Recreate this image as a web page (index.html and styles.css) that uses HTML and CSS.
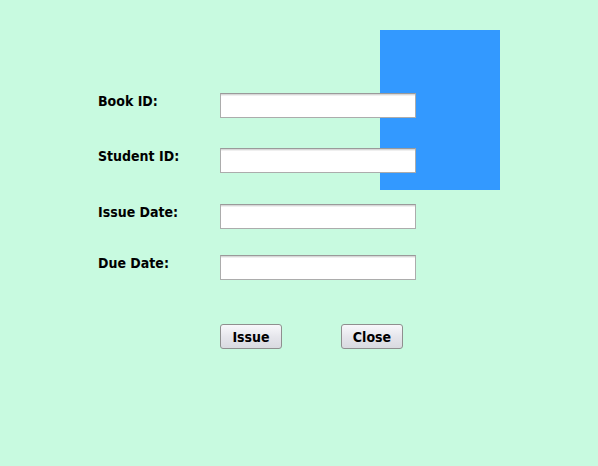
FILE: index.html
```html
<!DOCTYPE html>
<html>
<head>
<meta charset="utf-8">
<link rel="stylesheet" href="styles.css">
</head>
<body>
<div class="frame">
  <div class="photo"></div>
  <form class="form">
    <div class="row r1">
      <label class="lbl">Book ID:</label>
      <input class="field" type="text">
    </div>
    <div class="row r2">
      <label class="lbl">Student ID:</label>
      <input class="field" type="text">
    </div>
    <div class="row r3">
      <label class="lbl">Issue Date:</label>
      <input class="field" type="text">
    </div>
    <div class="row r4">
      <label class="lbl">Due Date:</label>
      <input class="field" type="text">
    </div>
    <div class="actions">
      <button type="button" class="btn">Issue</button>
      <button type="button" class="btn">Close</button>
    </div>
  </form>
</div>
</body>
</html>
```

FILE: styles.css
```css
html, body {
  margin: 0;
  padding: 0;
  background: #c8fae0;
}
.frame {
  position: relative;
  width: 598px;
  height: 466px;
  background: #c8fae0;
  font-family: "DejaVu Sans Condensed", "DejaVu Sans", sans-serif;
  font-stretch: condensed;
  font-weight: bold;
  font-size: 14px;
  color: #000;
}
.photo {
  position: absolute;
  left: 380px;
  top: 30px;
  width: 120px;
  height: 160px;
  background: #3399ff;
  z-index: 0;
}
.form {
  position: relative;
  z-index: 1;
  margin: 0;
  padding: 93px 0 0 98px;
  display: flex;
  flex-direction: column;
}
.row {
  display: flex;
  align-items: flex-start;
  height: 25px;
}
.r2 { margin-top: 30px; }
.r3 { margin-top: 31px; }
.r4 { margin-top: 26px; }
.lbl {
  width: 122px;
  padding-top: 0;
  line-height: 17px;
}
.field {
  box-sizing: border-box;
  width: 196px;
  height: 25px;
  margin: 0;
  padding: 2px 4px;
  background: #fff;
  border: 1px solid #acacac;
  border-top-color: #9a9a9a;
  box-shadow: inset 0 1px 0 #d8d8d8, inset 0 2px 0 #efefef;
  outline: none;
  font: inherit;
}
.actions {
  display: flex;
  gap: 59px;
  margin-top: 44px;
  padding-left: 122px;
}
.btn {
  box-sizing: border-box;
  width: 62px;
  height: 25px;
  margin: 0;
  padding: 0;
  border: 1px solid #8f8f8f;
  border-radius: 3px;
  background: linear-gradient(#f8f8fb, #e6e6ec 50%, #d9dae0);
  font: inherit;
  color: #000;
  line-height: 22px;
  text-align: center;
}
```
